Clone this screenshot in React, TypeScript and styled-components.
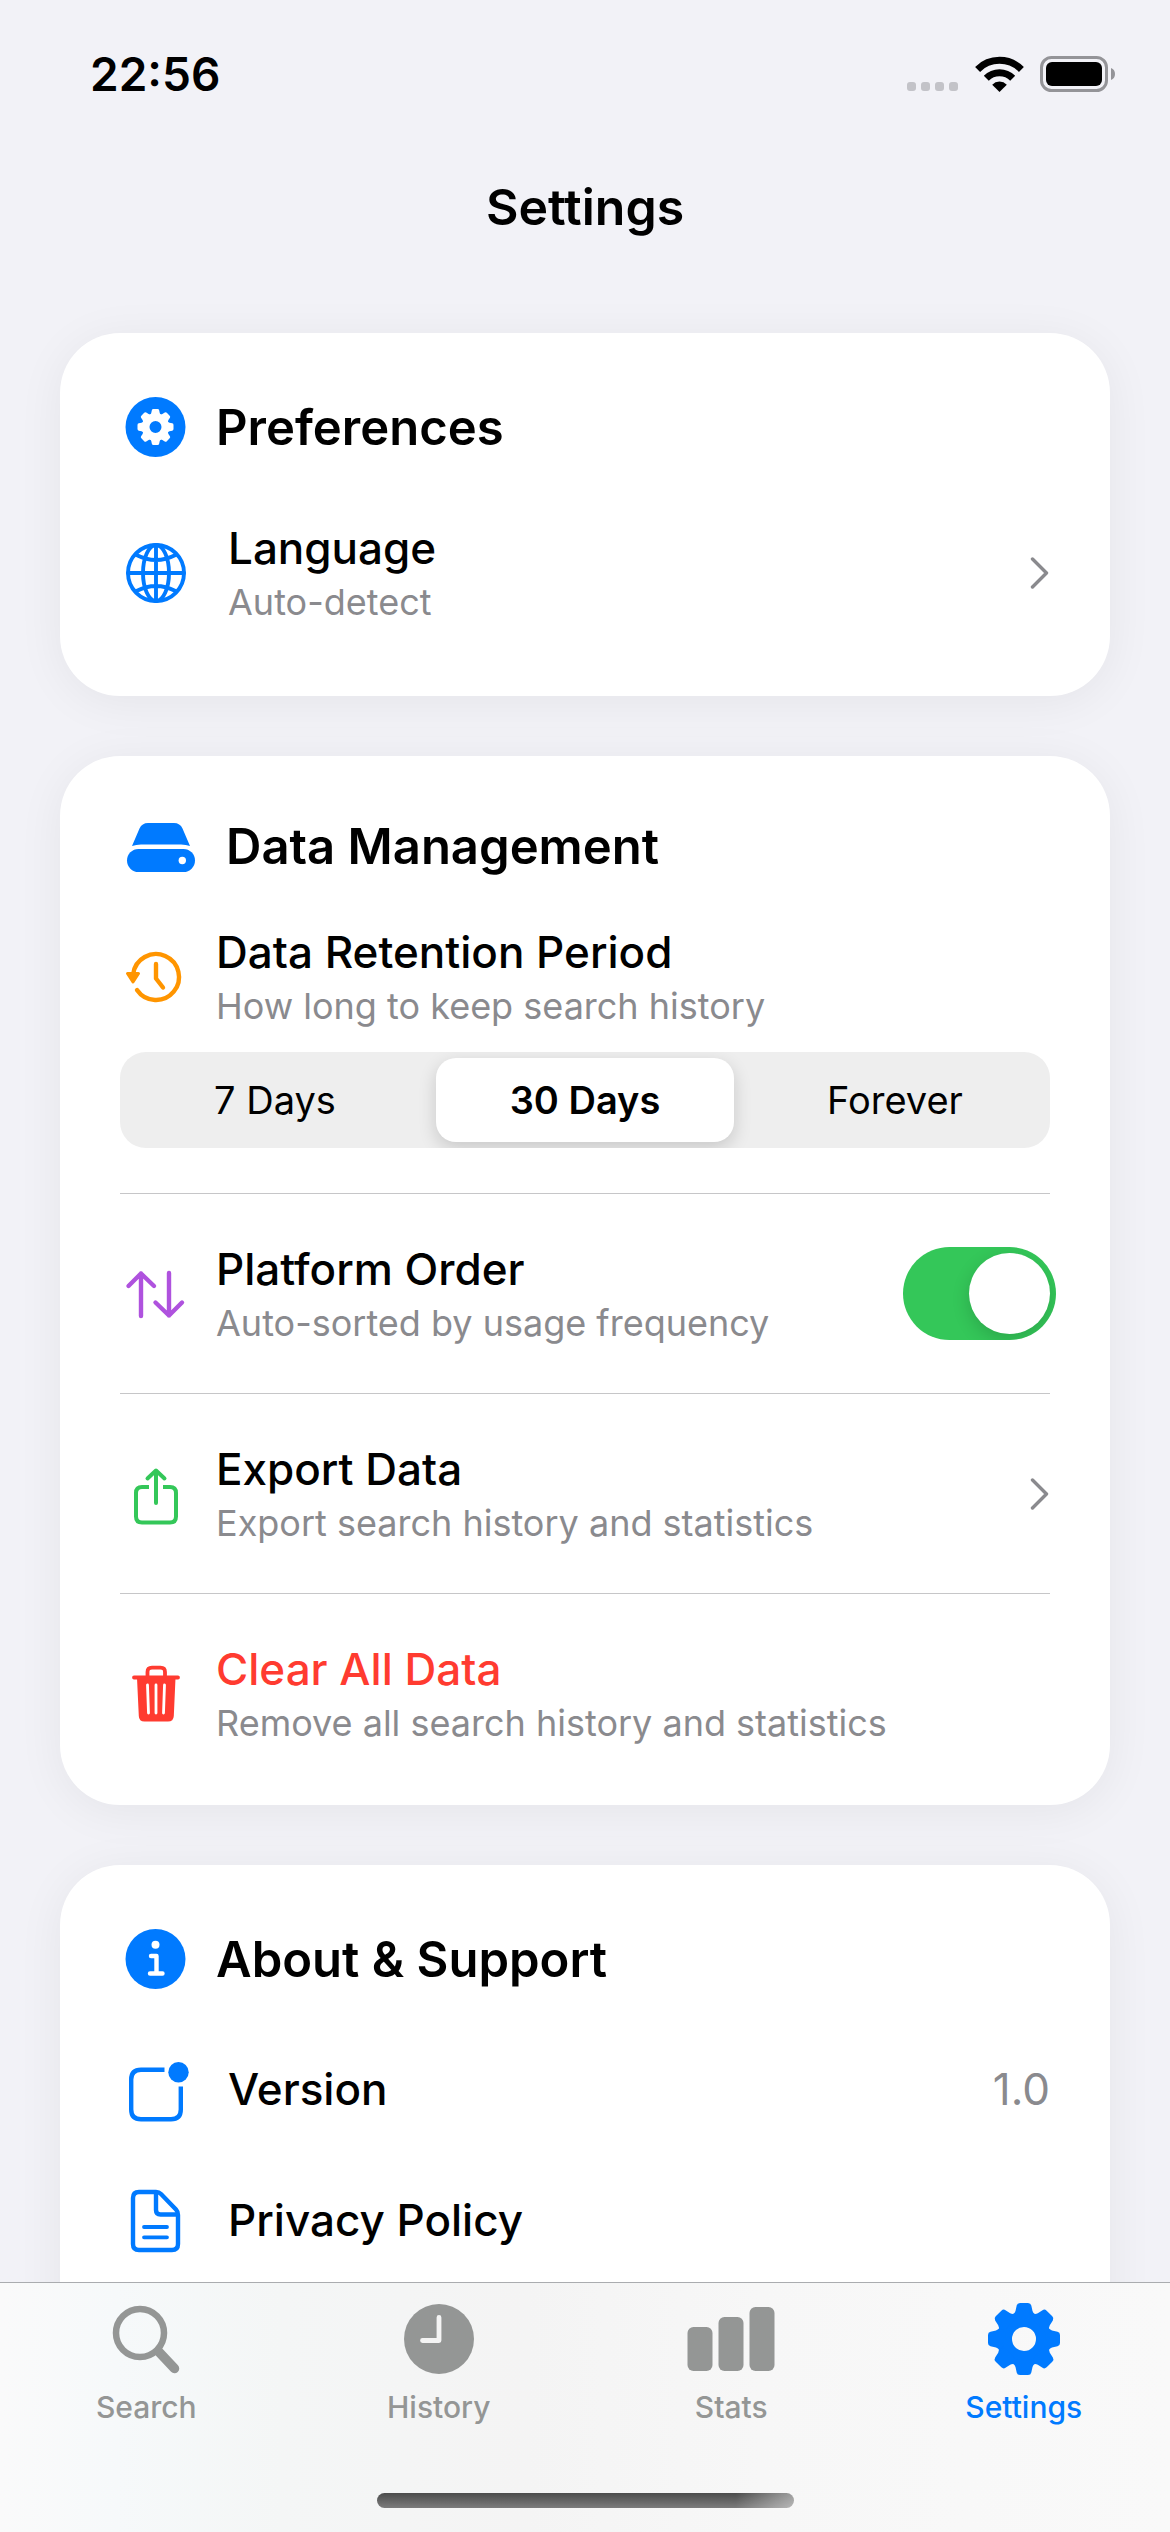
import React, { useState } from "react";
import styled, { createGlobalStyle } from "styled-components";

const color = {
  page: "#f2f2f7",
  card: "#ffffff",
  ink: "#000000",
  muted: "#8a8a8e",
  blue: "#007aff",
  orange: "#ff9500",
  purple: "#af52de",
  green: "#34c759",
  red: "#ff3b30",
  line: "#c6c6c8",
  tab: "#949695",
};

const GlobalStyle = createGlobalStyle`
  *, *::before, *::after { box-sizing: border-box; }
  body {
    margin: 0;
    background: ${color.page};
    color: ${color.ink};
    font-family: Inter, "Liberation Sans", sans-serif;
  }
  button, input { font: inherit; color: inherit; }
`;

const Screen = styled.div`
  height: 100vh;
  display: flex;
  flex-direction: column;
  overflow: hidden;
`;

const StatusBar = styled.div`
  flex: none;
  height: 148px;
  padding: 0 54px 0 90px;
  display: flex;
  align-items: center;
  justify-content: space-between;
`;

const Clock = styled.time`
  font-size: 46px;
  font-weight: 600;
`;

const StatusIcons = styled.div`
  display: flex;
  align-items: center;
  gap: 16px;
`;

const TitleBar = styled.header`
  flex: none;
  height: 118px;
  display: flex;
  align-items: center;
  justify-content: center;
`;

const PageTitle = styled.h1`
  margin: 0;
  font-size: 50px;
  font-weight: 600;
`;

const Content = styled.main`
  flex: 1;
  min-height: 0;
  overflow-y: auto;
  scrollbar-width: none;
  padding: 67px 60px 60px;
  display: flex;
  flex-direction: column;
  gap: 60px;
`;

const Card = styled.section`
  flex: none;
  padding: 60px;
  border-radius: 60px;
  background: ${color.card};
  box-shadow: 0 6px 48px rgba(0, 0, 0, 0.06);

  &:last-child {
    padding-bottom: 120px;
  }
`;

const CardHeader = styled.div<{ $compact?: boolean }>`
  height: ${(p) => (p.$compact ? 61 : 68)}px;
  margin-bottom: 48px;
  display: flex;
  align-items: center;
  gap: 24px;
`;

const CardTitle = styled.h2`
  margin: 0;
  font-size: 49px;
  font-weight: 600;
`;

const Icon = styled.svg<{ $tone?: string }>`
  flex: none;
  display: block;
  color: ${(p) => p.$tone ?? color.ink};
`;

const LinkRows = styled.div`
  display: flex;
  flex-direction: column;
  gap: 35px;
`;

const Row = styled.div<{ $wide?: boolean }>`
  width: 100%;
  margin: 0;
  padding: ${(p) => (p.$wide ? "12px 0" : "0")};
  min-height: ${(p) => (p.$wide ? 95 : 0)}px;
  border: 0;
  background: none;
  color: inherit;
  text-align: left;
  text-decoration: none;
  display: flex;
  align-items: center;
  gap: ${(p) => (p.$wide ? 36 : 24)}px;
`;

const RowText = styled.span`
  flex: 1;
  min-width: 0;
  display: flex;
  flex-direction: column;
  gap: 6px;
`;

const RowTitle = styled.span<{ $danger?: boolean }>`
  font-size: 44px;
  line-height: 54px;
  font-weight: 500;
  color: ${(p) => (p.$danger ? color.red : color.ink)};
`;

const RowNote = styled.span`
  font-size: 36px;
  line-height: 43px;
  color: ${color.muted};
`;

const RowValue = styled.span`
  font-size: 44px;
  line-height: 54px;
  color: ${color.muted};
`;

const Segments = styled.fieldset`
  margin: 24px 0 45px;
  padding: 6px 0;
  min-width: 0;
  height: 96px;
  border: 0;
  border-radius: 26px;
  background: #eeeeee;
  overflow: hidden;
  display: grid;
  grid-template-columns: repeat(3, 1fr);
`;

const Segment = styled.label`
  margin: 0 6px;
  border-radius: 20px;
  display: flex;
  align-items: center;
  justify-content: center;
  font-size: 38px;
  cursor: pointer;

  &:has(input:checked) {
    background: ${color.card};
    font-weight: 600;
    box-shadow: 0 6px 18px rgba(0, 0, 0, 0.16);
  }
`;

const HiddenRadio = styled.input`
  appearance: none;
  width: 0;
  height: 0;
  margin: 0;
`;

const DividedItem = styled.div`
  border-top: 1px solid ${color.line};
  padding: 48px 0;

  &:last-child {
    padding-bottom: 0;
  }
`;

const Switch = styled.input`
  appearance: none;
  flex: none;
  width: 153px;
  height: 93px;
  margin: 0 -6px 0 0;
  padding: 6px;
  border-radius: 47px;
  background: #e9e9ea;
  overflow: hidden;
  display: flex;
  cursor: pointer;

  &::before {
    content: "";
    width: 81px;
    height: 81px;
    border-radius: 50%;
    background: ${color.card};
    box-shadow: 0 6px 18px rgba(0, 0, 0, 0.16);
  }

  &:checked {
    background: ${color.green};
    justify-content: flex-end;
  }
`;

const TabBar = styled.footer`
  flex: none;
  height: 250px;
  border-top: 1px solid #aaacaf;
  background: linear-gradient(
    90deg,
    #fafafa 0%,
    #f6f9fa 10%,
    #f4f6f6 24%,
    #f4f4f4 45%,
    #f7f7f7 65%,
    #f9f9f9 100%
  );
  display: flex;
  flex-direction: column;
  align-items: center;
  justify-content: space-between;
  padding: 20px 0 24px;
`;

const Tabs = styled.nav`
  width: 100%;
  display: grid;
  grid-template-columns: repeat(4, 1fr);
`;

const Tab = styled.button<{ $active?: boolean }>`
  border: 0;
  padding: 0;
  background: none;
  color: ${(p) => (p.$active ? color.blue : color.tab)};
  display: flex;
  flex-direction: column;
  align-items: center;
  gap: 14px;
  font-size: 30px;
  line-height: 36px;
  font-weight: 500;
  cursor: pointer;
`;

const TabIcon = styled.svg`
  display: block;
`;

const HomeIndicator = styled.div`
  width: 417px;
  height: 15px;
  border-radius: 8px;
  background: linear-gradient(90deg, transparent 86%, rgba(255, 255, 255, 0.45) 100%),
    linear-gradient(#4c4c4c, #7c7c7c);
`;

const toothAngles = [0, 45, 90, 135, 180, 225, 270, 315];

/* Eight-toothed gear, 72 units across, centred on the origin. */
function GearShape() {
  return (
    <g>
      <circle r="19.5" fill="none" stroke="currentColor" strokeWidth="15" />
      {toothAngles.map((a) => (
        <path
          key={a}
          transform={`rotate(${a})`}
          fill="currentColor"
          d="M-12 -24Q-9 -25.500 -8.500 -28L-7.300 -33.500Q-6.800 -36 -4 -36H4Q6.800 -36 7.300 -33.500L8.500 -28Q9 -25.500 12 -24L6 -20H-6Z"
        />
      ))}
    </g>
  );
}

const strokes = {
  fill: "none",
  stroke: "currentColor",
  strokeLinecap: "round" as const,
  strokeLinejoin: "round" as const,
};

function BoxIcon({ tone, children }: { tone: string; children: React.ReactNode }) {
  return (
    <Icon $tone={tone} width="72" height="72" viewBox="0 0 72 72" aria-hidden="true">
      {children}
    </Icon>
  );
}

function Chevron() {
  return (
    <Icon $tone={color.muted} width="20" height="32" viewBox="0 0 20 32" aria-hidden="true">
      <path d="M2.500 2L16.500 16L2.500 30" {...strokes} strokeWidth="3.400" />
    </Icon>
  );
}

function SettingRow({
  icon,
  title,
  note,
  danger,
  children,
}: {
  icon: React.ReactNode;
  title: string;
  note?: string;
  danger?: boolean;
  children?: React.ReactNode;
}) {
  return (
    <>
      {icon}
      <RowText>
        <RowTitle $danger={danger}>{title}</RowTitle>
        {note && <RowNote>{note}</RowNote>}
      </RowText>
      {children}
    </>
  );
}

const periods = ["7 Days", "30 Days", "Forever"];

export default function App() {
  const [period, setPeriod] = useState("30 Days");
  const [autoSort, setAutoSort] = useState(true);
  const [tab, setTab] = useState("Settings");

  const tabs = [
    {
      name: "Search",
      width: 72,
      art: (
        <>
          <circle cx="30" cy="30" r="24" {...strokes} strokeWidth="6.500" />
          <path d="M49 49L64.500 65.500" {...strokes} strokeWidth="9.500" />
        </>
      ),
    },
    {
      name: "History",
      width: 72,
      art: (
        <>
          <circle cx="36" cy="36" r="35" fill="currentColor" />
          <path d="M36 14.500V37.500H19.500" {...strokes} stroke="#f4f4f4" strokeWidth="4.800" />
        </>
      ),
    },
    {
      name: "Stats",
      width: 90,
      art: (
        <g fill="currentColor">
          <rect x="1.500" y="24" width="25" height="44" rx="6" />
          <rect x="32.500" y="14" width="25" height="54" rx="6" />
          <rect x="63.500" y="4" width="25" height="64" rx="6" />
        </g>
      ),
    },
    {
      name: "Settings",
      width: 72,
      art: (
        <g transform="translate(36 36)">
          <GearShape />
        </g>
      ),
    },
  ];

  return (
    <Screen>
      <GlobalStyle />
      <StatusBar>
        <Clock>22:56</Clock>
        <StatusIcons>
          <Icon width="52" height="36" viewBox="0 0 52 36" aria-hidden="true">
            <g fill="#c3c3c8">
              <rect x="0" y="26" width="9" height="9" rx="3" />
              <rect x="14" y="26" width="9" height="9" rx="3" />
              <rect x="28" y="26" width="9" height="9" rx="3" />
              <rect x="42" y="26" width="9" height="9" rx="3" />
            </g>
          </Icon>
          <Icon width="49" height="36" viewBox="0 0 49 36" aria-label="Wi-Fi">
            <g fill="none" stroke="currentColor" strokeWidth="7">
              <path d="M2.600 13.400A31 31 0 0 1 46.400 13.400" />
              <path d="M11.300 22.200A18.500 18.500 0 0 1 37.700 22.200" />
            </g>
            <path d="M17.200 28.700A10.200 10.200 0 0 1 31.800 28.700L24.500 36Z" fill="currentColor" />
          </Icon>
          <Icon width="76" height="36" viewBox="0 0 76 36" aria-label="Battery">
            <rect x="1.500" y="1.500" width="65" height="33" rx="10" fill="none" stroke="#949498" strokeWidth="3" />
            <rect x="6" y="6" width="56" height="24" rx="6" fill="currentColor" />
            <path d="M71 12Q75 13.500 75 18T71 24Z" fill="#949498" />
          </Icon>
        </StatusIcons>
      </StatusBar>

      <TitleBar>
        <PageTitle>Settings</PageTitle>
      </TitleBar>

      <Content>
        <Card>
          <CardHeader>
            <BoxIcon tone={color.blue}>
              <circle cx="35.500" cy="36" r="30" fill="currentColor" />
              <g transform="translate(35.500 36) scale(.5)" color="#fff">
                <GearShape />
              </g>
            </BoxIcon>
            <CardTitle>Preferences</CardTitle>
          </CardHeader>
          <Row as="button" $wide>
            <SettingRow
              title="Language"
              note="Auto-detect"
              icon={
                <BoxIcon tone={color.blue}>
                  <g {...strokes} strokeWidth="3.900">
                    <circle cx="36" cy="36" r="28" />
                    <ellipse cx="36" cy="36" rx="13" ry="28" />
                    <path d="M36 8V64M8 36H64M16.500 18Q36 28 55.500 18M16.500 54Q36 44 55.500 54" />
                  </g>
                </BoxIcon>
              }
            >
              <Chevron />
            </SettingRow>
          </Row>
        </Card>

        <Card>
          <CardHeader $compact>
            <Icon $tone={color.blue} width="82" height="60" viewBox="0 0 82 60" aria-hidden="true">
              <path
                fill="currentColor"
                d="M12 29L19.500 11.500Q22 6 28 6H54Q60 6 62.500 11.500L70 29Q66 27.500 61 27.500H21Q16 27.500 12 29Z"
              />
              <rect x="7" y="32" width="68" height="23" rx="11.500" fill="currentColor" />
              <circle cx="62.300" cy="43.500" r="3.700" fill="#fff" />
            </Icon>
            <CardTitle>Data Management</CardTitle>
          </CardHeader>

          <Row>
            <SettingRow
              title="Data Retention Period"
              note="How long to keep search history"
              icon={
                <BoxIcon tone={color.orange}>
                  <path d="M17 49A23 23 0 1 0 13.200 33" {...strokes} strokeWidth="4.400" />
                  <path d="M36 23V37.500L43 46.500" {...strokes} strokeWidth="4.400" />
                  <path d="M7.500 32.500H18.500L13 41Z" {...strokes} fill="currentColor" strokeWidth="3" />
                </BoxIcon>
              }
            />
          </Row>
          <Segments aria-label="Data Retention Period">
            {periods.map((p) => (
              <Segment key={p}>
                <HiddenRadio
                  type="radio"
                  name="period"
                  value={p}
                  checked={period === p}
                  onChange={() => setPeriod(p)}
                />
                {p}
              </Segment>
            ))}
          </Segments>

          <DividedItem>
            <Row as="label">
              <SettingRow
                title="Platform Order"
                note="Auto-sorted by usage frequency"
                icon={
                  <BoxIcon tone={color.purple}>
                    <path
                      d="M21 58V15.500M8.500 28L21 15.500L34 28M49 15V57.500M35.500 44.500L49 57.500L62 44.500"
                      {...strokes}
                      strokeWidth="4.400"
                    />
                  </BoxIcon>
                }
              >
                <Switch type="checkbox" checked={autoSort} onChange={() => setAutoSort(!autoSort)} />
              </SettingRow>
            </Row>
          </DividedItem>

          <DividedItem>
            <Row as="button">
              <SettingRow
                title="Export Data"
                note="Export search history and statistics"
                icon={
                  <BoxIcon tone={color.green}>
                    <path
                      d="M29 29H22Q16 29 16 35V58.500Q16 64.500 22 64.500H50Q56 64.500 56 58.500V35Q56 29 50 29H43"
                      fill="none"
                      stroke="currentColor"
                      strokeWidth="4"
                    />
                    <path d="M36 45V13M27.500 20.500L36 12.500L44.500 20.500" {...strokes} strokeWidth="4" />
                  </BoxIcon>
                }
              >
                <Chevron />
              </SettingRow>
            </Row>
          </DividedItem>

          <DividedItem>
            <Row as="button">
              <SettingRow
                danger
                title="Clear All Data"
                note="Remove all search history and statistics"
                icon={
                  <BoxIcon tone={color.red}>
                    <path d="M14 19.500H58M27.500 19V14Q27.500 9.700 32 9.700H40.500Q45 9.700 45 14V19" {...strokes} strokeWidth="3.800" />
                    <path d="M17 20H55.500L53.800 58Q53.500 63.500 48 63.500H24.500Q19 63.500 18.800 58Z" fill="currentColor" />
                    <path d="M27.500 27L28.500 55M36 27V55M44.500 27L43.500 55" {...strokes} stroke="#fff" strokeWidth="2.800" />
                  </BoxIcon>
                }
              />
            </Row>
          </DividedItem>
        </Card>

        <Card>
          <CardHeader>
            <BoxIcon tone={color.blue}>
              <circle cx="35.500" cy="36" r="30" fill="currentColor" />
              <circle cx="35.500" cy="21.700" r="4" fill="#fff" />
              <path d="M31 33H36.500V50.500M30 50.500H42.500" {...strokes} stroke="#fff" strokeWidth="4.400" />
            </BoxIcon>
            <CardTitle>About &amp; Support</CardTitle>
          </CardHeader>
          <LinkRows>
            <Row $wide>
              <SettingRow
                title="Version"
                icon={
                  <BoxIcon tone={color.blue}>
                    <path
                      d="M44.500 16.700H21Q11.200 16.700 11.200 26.500V56.500Q11.200 66.300 21 66.300H51Q60.800 66.300 60.800 56.500V33.500"
                      fill="none"
                      stroke="currentColor"
                      strokeWidth="4.400"
                    />
                    <circle cx="58.500" cy="19.200" r="10.200" fill="currentColor" />
                  </BoxIcon>
                }
              >
                <RowValue>1.0</RowValue>
              </SettingRow>
            </Row>
            <Row as="a" href="#privacy" $wide>
              <SettingRow
                title="Privacy Policy"
                icon={
                  <BoxIcon tone={color.blue}>
                    <g {...strokes} strokeWidth="4.400">
                      <path d="M19 8H36Q39 8 41 10L56 25.500Q58 27.500 58 31V60Q58 66 52 66H19Q13 66 13 60V14Q13 8 19 8Z" />
                      <path d="M36 9V26Q36 30.500 40.500 30.500H57" />
                      <path d="M24 43H47M24 53.300H47" strokeWidth="3.800" />
                    </g>
                  </BoxIcon>
                }
              />
            </Row>
          </LinkRows>
        </Card>
      </Content>

      <TabBar>
        <Tabs>
          {tabs.map((t) => (
            <Tab key={t.name} $active={tab === t.name} onClick={() => setTab(t.name)}>
              <TabIcon width={t.width} height="72" viewBox={`0 0 ${t.width} 72`} aria-hidden="true">
                {t.art}
              </TabIcon>
              {t.name}
            </Tab>
          ))}
        </Tabs>
        <HomeIndicator />
      </TabBar>
    </Screen>
  );
}
